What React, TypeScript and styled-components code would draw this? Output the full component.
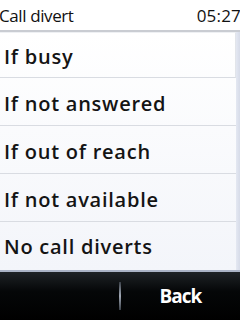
import React from "react";
import styled, { createGlobalStyle } from "styled-components";

const Global = createGlobalStyle`
  html, body { margin: 0; padding: 0; background: #fff; }
  body { width: 240px; height: 320px; overflow: hidden; font-family: "Open Sans", "DejaVu Sans", sans-serif; }
`;

const Screen = styled.div`
  width: 240px;
  height: 320px;
  display: flex;
  flex-direction: column;
  background: #fff;
`;

const Header = styled.div`
  height: 30px;
  display: flex;
  align-items: center;
  justify-content: space-between;
  background: #fff;
  border-bottom: 2px solid #c9ccd2;
  font-size: 17px;
  color: #111;
`;

const Title = styled.span`
  margin-left: -1px;
  letter-spacing: -0.4px;
`;

const Clock = styled.span`
  margin-right: -1px;
  letter-spacing: 0.2px;
`;

const Body = styled.div`
  flex: 1;
  display: flex;
  background: linear-gradient(#ffffff, #f3f5fa);
`;

const List = styled.div`
  flex: 1;
  display: flex;
  flex-direction: column;
`;

const Item = styled.div<{ $first?: boolean; $last?: boolean }>`
  height: ${(p) => (p.$first || p.$last ? 46 : 48)}px;
  display: flex;
  align-items: center;
  padding: 3px 0 0 4px;
  border-bottom: ${(p) => (p.$last ? "none" : "1px solid #d9dce2")};
  ${(p) => (p.$first ? "border-right: 1px solid #e2e5ea; border-top: 1px solid #eef0f3;" : "")}
  font-size: 20px;
  font-weight: 600;
  letter-spacing: 0.75px;
  color: #141414;
  box-sizing: border-box;
`;

const Track = styled.div`
  width: 4px;
  background: linear-gradient(90deg, #e4e8f2, #d6dbe8);
`;

const SoftKeys = styled.div`
  height: 50px;
  display: grid;
  grid-template-columns: 1fr 2px 1fr;
  align-items: center;
  background: linear-gradient(#1e2226, #050708 40%, #000);
  border-top: 2px solid #aab3c6;
  box-sizing: border-box;
`;

const Divider = styled.div`
  height: 28px;
  width: 2px;
  background: linear-gradient(#3a4048, #a0a8b4, #3a4048);
`;

const Key = styled.div`
  color: #fff;
  font-size: 19px;
  font-weight: 700;
  text-align: center;
  letter-spacing: -1px;
  font-family: "Open Sans", sans-serif;
`;

const items = ["If busy", "If not answered", "If out of reach", "If not available", "No call diverts"];

export default function App() {
  return (
    <>
      <Global />
      <Screen>
        <Header>
          <Title>Call divert</Title>
          <Clock>05:27</Clock>
        </Header>
        <Body>
          <List>
            {items.map((t, i) => (
              <Item key={t} $first={i === 0} $last={i === items.length - 1}>{t}</Item>
            ))}
          </List>
          <Track />
        </Body>
        <SoftKeys>
          <Key />
          <Divider />
          <Key>Back</Key>
        </SoftKeys>
      </Screen>
    </>
  );
}
